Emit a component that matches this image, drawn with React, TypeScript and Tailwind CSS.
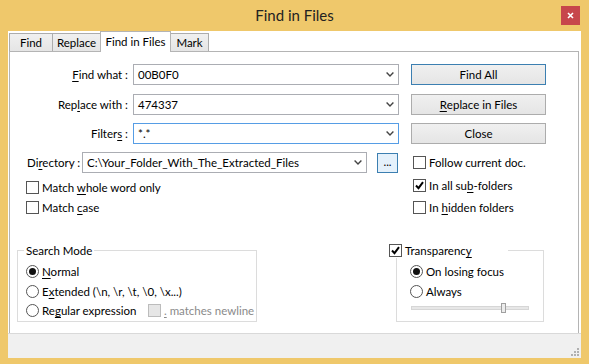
import React from "react";

function U({ children }: { children: React.ReactNode }) {
  return <span className="underline underline-offset-[2px]">{children}</span>;
}

function Tick() {
  return (
    <svg width="9" height="9" viewBox="0 0 9 9">
      <path d="M1 4.5 L3.5 7.2 L8 1.2" stroke="#000" strokeWidth="2" fill="none" />
    </svg>
  );
}

function Check({
  checked,
  disabled,
  children,
}: {
  checked?: boolean;
  disabled?: boolean;
  children: React.ReactNode;
}) {
  return (
    <div className="flex items-center h-[13px]">
      <span
        className={`w-[13px] h-[13px] shrink-0 border flex items-center justify-center ${
          disabled ? "border-[#bcbcbc] bg-[#e6e6e6]" : "border-[#555] bg-white"
        }`}
      >
        {checked && <Tick />}
      </span>
      <span className={`ml-[3px] whitespace-nowrap ${disabled ? "text-[#8a8a8a]" : ""}`}>
        {children}
      </span>
    </div>
  );
}

function Radio({ checked, children }: { checked?: boolean; children: React.ReactNode }) {
  return (
    <div className="flex items-center h-[13px]">
      <span className="w-[13px] h-[13px] shrink-0 rounded-full border border-[#555] bg-white flex items-center justify-center">
        {checked && <span className="w-[7px] h-[7px] rounded-full bg-[#111]" />}
      </span>
      <span className="ml-[3px] whitespace-nowrap">{children}</span>
    </div>
  );
}

function Combo({
  value,
  width,
  focused,
}: {
  value: string;
  width: string;
  focused?: boolean;
}) {
  return (
    <div
      className={`flex items-center h-[21px] border bg-white ${width} ${
        focused ? "border-[#569de5]" : "border-[#abadb3]"
      }`}
    >
      <span className="flex-1 pl-[4px] whitespace-nowrap">{value}</span>
      <svg width="8" height="5" viewBox="0 0 8 5" className="mr-[4px] shrink-0">
        <path d="M0.6 0.6 L4 4 L7.4 0.6" stroke="#444" strokeWidth="1.4" fill="none" />
      </svg>
    </div>
  );
}

function Btn({
  children,
  focused,
}: {
  children: React.ReactNode;
  focused?: boolean;
}) {
  return (
    <div
      className={`w-[135px] h-[21px] border flex items-center justify-center bg-linear-to-b from-[#f0f0f0] to-[#e5e5e5] ${
        focused ? "border-[#3c7fb1]" : "border-[#acacac]"
      }`}
    >
      {children}
    </div>
  );
}

function Tab({
  label,
  width,
  active,
  first,
}: {
  label: string;
  width: string;
  active?: boolean;
  first?: boolean;
}) {
  if (active) {
    return (
      <div
        className={`${width} -ml-px h-[21px] -mb-px relative z-10 bg-white border-t border-l border-r border-[#b4b4b4] flex items-center justify-center pb-[2px] whitespace-nowrap`}
      >
        {label}
      </div>
    );
  }
  return (
    <div
      className={`${width} ${first ? "" : "-ml-px"} h-[18px] border-t border-l border-r border-[#acacac] bg-linear-to-b from-[#f0f0f0] to-[#e5e5e5] flex items-center justify-center whitespace-nowrap`}
    >
      {label}
    </div>
  );
}

export default function App() {
  return (
    <div className="w-[589px] h-[364px] bg-[#efc86b] flex flex-col text-[11.5px] text-black font-[family-name:Lato,'Liberation_Sans',sans-serif] leading-[15px]">
      {/* title bar */}
      <div className="h-[31px] flex items-center shrink-0">
        <div className="w-[28px]" />
        <div className="flex-1 text-center text-[15px] leading-[20px] text-[#222] pb-[1px]">Find in Files</div>
        <div className="w-[19px] h-[19px] mr-[9px] bg-[#c7464b] flex items-center justify-center">
          <svg width="7" height="7" viewBox="0 0 7 7">
            <path d="M1 1 L6 6 M6 1 L1 6" stroke="#fff" strokeWidth="1.6" />
          </svg>
        </div>
      </div>

      {/* client */}
      <div className="mx-[8px] flex-1 bg-white flex flex-col pl-[1px] pr-[2px]">
        <div className="h-[20px] flex items-end shrink-0">
          <Tab label="Find" width="w-[44px]" first />
          <Tab label="Replace" width="w-[49px]" />
          <Tab label="Find in Files" width="w-[71px]" active />
          <Tab label="Mark" width="w-[39px]" />
        </div>

        <div className="flex-1 border-t border-l border-r border-[#b4b4b4] flex flex-col">
          {/* rows 1-3 */}
          <div className="flex items-center mt-[12px]">
            <div className="w-[118px] text-right whitespace-nowrap">
              <U>F</U>ind what :
            </div>
            <div className="ml-[5px]">
              <Combo value="00B0F0" width="w-[266px]" />
            </div>
            <div className="ml-[12px]">
              <Btn focused>Find All</Btn>
            </div>
          </div>
          <div className="flex items-center mt-[9px]">
            <div className="w-[118px] text-right whitespace-nowrap">
              Rep<U>l</U>ace with :
            </div>
            <div className="ml-[5px]">
              <Combo value="474337" width="w-[266px]" />
            </div>
            <div className="ml-[12px]">
              <Btn>
                <U>R</U>eplace in Files
              </Btn>
            </div>
          </div>
          <div className="flex items-center mt-[8px]">
            <div className="w-[118px] text-right whitespace-nowrap">
              Filter<U>s</U> :
            </div>
            <div className="ml-[5px]">
              <Combo value="*.*" width="w-[266px]" focused />
            </div>
            <div className="ml-[12px]">
              <Btn>Close</Btn>
            </div>
          </div>

          {/* directory + options */}
          <div className="flex mt-[8px]">
            <div className="flex flex-col">
              <div className="flex items-center h-[21px]">
                <div className="w-[55px] ml-[17px] whitespace-nowrap">
                  Di<U>r</U>ectory :
                </div>
                <Combo value="C:\Your_Folder_With_The_Extracted_Files" width="w-[285px]" />
                <div className="ml-[10px] w-[21px] h-[20px] border border-[#3c7fb1] bg-[#e5f1fb] flex items-center justify-center pb-[3px]">
                  ...
                </div>
              </div>
              <div className="ml-[16px] mt-[8px]">
                <Check>
                  Match <U>w</U>hole word only
                </Check>
              </div>
              <div className="ml-[16px] mt-[7px]">
                <Check>
                  Match <U>c</U>ase
                </Check>
              </div>
            </div>
            <div className="flex flex-col ml-[15px]">
              <div className="h-[21px] flex items-center">
                <Check>Follow current doc.</Check>
              </div>
              <div className="mt-[6px]">
                <Check checked>
                  In all su<U>b</U>-folders
                </Check>
              </div>
              <div className="mt-[9px]">
                <Check>
                  In <U>h</U>idden folders
                </Check>
              </div>
            </div>
          </div>

          {/* groups */}
          <div className="flex items-start mt-[29px]">
            <fieldset className="ml-[7px] w-[240px] h-[79px] border border-[#dcdcdc] pl-[6px]">
              <legend className="px-[2px] leading-[15px]">Search Mode</legend>
              <div className="ml-[2px] mt-[7px]">
                <Radio checked>
                  <U>N</U>ormal
                </Radio>
              </div>
              <div className="ml-[2px] mt-[7px]">
                <Radio>
                  E<U>x</U>tended (\n, \r, \t, \0, \x...)
                </Radio>
              </div>
              <div className="ml-[2px] mt-[6px] flex items-center">
                <div className="w-[122px]">
                  <Radio>
                    Re<U>g</U>ular expression
                  </Radio>
                </div>
                <Check disabled>
                  <U>.</U> matches newline
                </Check>
              </div>
            </fieldset>

            <fieldset className="ml-[139px] w-[148px] h-[79px] border border-[#dcdcdc] pl-0">
              <legend className="-ml-[8px] w-[119px] h-[15px] flex items-center bg-white">
                <Check checked>
                  Transparenc<U>y</U>
                </Check>
              </legend>
              <div className="ml-[13px] mt-[7px]">
                <Radio checked>On losing focus</Radio>
              </div>
              <div className="ml-[13px] mt-[7px]">
                <Radio>Always</Radio>
              </div>
              <div className="ml-[14px] mt-[5px] w-[118px] h-[10px] relative flex items-center">
                <div className="w-full h-[4px] bg-[#e7e7e7] border border-[#d6d6d6]" />
                <div className="absolute left-[90px] top-0 w-[5px] h-[10px] bg-[#ececec] border border-[#a0a0a0]" />
              </div>
            </fieldset>
          </div>
        </div>

        {/* status bar */}
        <div className="-ml-px -mr-[2px] h-[25px] shrink-0 bg-[#f0f0f0] border-t border-[#d9d9d9] flex items-end justify-end pr-[2px] pb-[2px]">
          <svg width="9" height="9" viewBox="0 0 9 9">
            <rect x="7" y="1" width="2" height="2" fill="#b0b0b0" />
            <rect x="4" y="4" width="2" height="2" fill="#b0b0b0" />
            <rect x="7" y="4" width="2" height="2" fill="#b0b0b0" />
            <rect x="1" y="7" width="2" height="2" fill="#b0b0b0" />
            <rect x="4" y="7" width="2" height="2" fill="#b0b0b0" />
            <rect x="7" y="7" width="2" height="2" fill="#b0b0b0" />
          </svg>
        </div>
      </div>
      <div className="h-[6px] shrink-0" />
    </div>
  );
}
